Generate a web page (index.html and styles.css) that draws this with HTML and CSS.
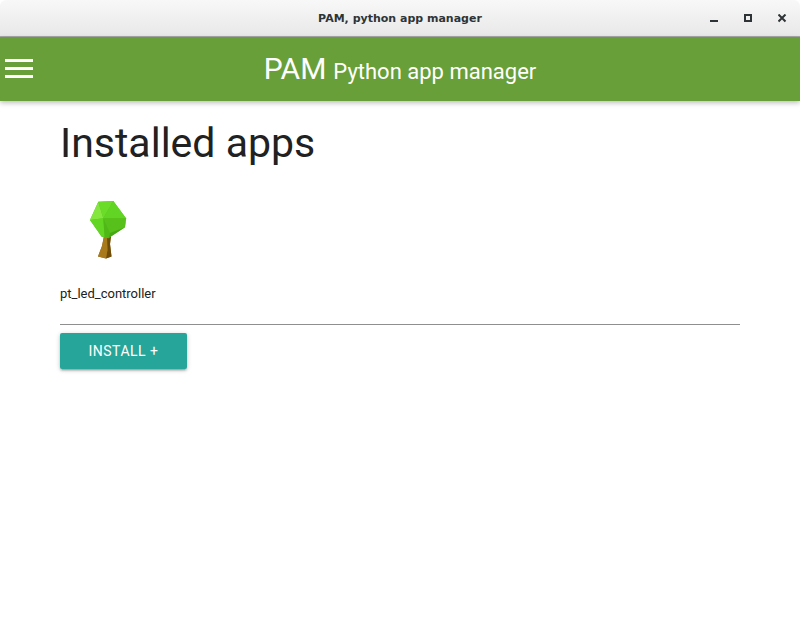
FILE: index.html
```html
<!DOCTYPE html>
<html lang="en">
<head>
<meta charset="utf-8">
<title>PAM, python app manager</title>
<link rel="stylesheet" href="styles.css">
</head>
<body>
<div class="window">
  <header class="titlebar">
    <div class="titlebar-title">PAM, python app manager</div>
    <div class="window-controls">
      <svg class="wc" width="10" height="10" viewBox="0 0 10 10"><rect x="0" y="6" width="8" height="2" fill="#2e3436"/></svg>
      <svg class="wc" width="10" height="10" viewBox="0 0 10 10"><rect x="1" y="1" width="6" height="6" fill="none" stroke="#2e3436" stroke-width="2"/></svg>
      <svg class="wc" width="10" height="10" viewBox="0 0 10 10"><path d="M0.5 0.5 L7.5 7.5 M7.5 0.5 L0.5 7.5" stroke="#2e3436" stroke-width="2" fill="none"/></svg>
    </div>
  </header>
  <nav class="appbar">
    <button class="menu" aria-label="Menu"><span></span><span></span><span></span></button>
    <div class="appbar-title"><span class="big">PAM</span> <span class="small">Python app manager</span></div>
  </nav>
  <main class="content">
    <h1 class="heading">Installed apps</h1>
    <div class="app">
      <svg class="app-icon" width="48" height="64" viewBox="0 0 48 64">
        <path d="M20 38 L27 38 L26 46 L27.5 58.5 L22 60.5 L14 58.5 L18 48 Z" fill="#8f6410"/>
        <path d="M23 40 L27 38 L26 46 L27.5 58.5 L22 60.5 L23.5 52 Z" fill="#6f4c08"/>
        <path d="M14 58.5 L18 48 L20 38 L23 40 L23.5 52 L22 60.5 Z" fill="#a87a1c"/>
        <path d="M14.3 3.7 L29.3 3 L42 20.3 L41 29.3 L24.3 40.3 L17.7 38.7 L6 22 Z" fill="#58c41c"/>
        <path d="M14.3 3.7 L6 22 L19.3 20.3 Z" fill="#86e640"/>
        <path d="M14.3 3.7 L29.3 3 L19.3 20.3 Z" fill="#6cdc2a"/>
        <path d="M29.3 3 L42 20.3 L19.3 20.3 Z" fill="#62d424"/>
        <path d="M6 22 L19.3 20.3 L21 38.7 L17.7 38.7 Z" fill="#62d622"/>
        <path d="M19.3 20.3 L42 20.3 L41 29.3 L26 35 Z" fill="#58c01a"/>
        <path d="M19.3 20.3 L26 35 L24.3 40.3 L20.5 39.5 Z" fill="#50b816"/>
        <path d="M26 35 L41 29.3 L24.3 40.3 Z" fill="#46a814"/>
      </svg>
      <div class="app-name">pt_led_controller</div>
    </div>
    <hr class="divider">
    <button class="install">INSTALL +</button>
  </main>
</div>
</body>
</html>
```
FILE: styles.css
```css
* { box-sizing: border-box; }
html, body { margin: 0; padding: 0; height: 100%; background: #fff; }
.window {
  width: 800px;
  height: 637px;
  display: flex;
  flex-direction: column;
  font-family: Roboto, sans-serif;
  color: #212121;
  background: #fff;
  overflow: hidden;
}
.titlebar {
  height: 37px;
  flex: none;
  display: flex;
  align-items: center;
  justify-content: center;
  position: relative;
  background: linear-gradient(#f8f8f8, #e8e8e8);
  border-bottom: 1px solid #a8a8a8;
  border-radius: 6px 6px 0 0;
}
.titlebar-title {
  font-family: "DejaVu Sans", sans-serif;
  font-weight: 700;
  font-size: 11px;
  color: #2e3436;
}
.window-controls {
  position: absolute;
  right: 12px;
  top: 14px;
  display: flex;
  gap: 24px;
}
.wc { display: block; }
.appbar {
  height: 64px;
  flex: none;
  background: #689f38;
  color: #fff;
  display: flex;
  align-items: center;
  justify-content: center;
  position: relative;
  padding-bottom: 2px;
  box-shadow: 0 2px 5px rgba(0,0,0,.26);
}
.menu {
  position: absolute;
  left: 5px;
  top: 22px;
  width: 28px;
  height: 19px;
  padding: 0;
  border: 0;
  background: none;
  display: flex;
  flex-direction: column;
  justify-content: space-between;
}
.menu span { display: block; height: 3px; background: #fff; }
.appbar-title { white-space: nowrap; font-weight: 400; }
.big { font-size: 30px; font-weight: 400; margin-right: 3px; }
.small { font-size: 22px; font-weight: 400; }
.content { padding: 0 60px; flex: 1; }
.heading {
  margin: 16px 0 0;
  font-size: 41px;
  line-height: 52px;
  font-weight: 400;
}
.app { margin-top: 29px; height: 126px; }
.app-icon { display: block; margin-left: 24px; }
.app-name { margin-top: 23px; font-size: 13px; line-height: 18px; }
.divider { margin: 0; border: 0; height: 1px; background: #8f8f8f; }
.install {
  display: block;
  margin-top: 8px;
  width: 127px;
  height: 36px;
  background: #26a69a;
  color: #fff;
  border: 0;
  border-radius: 2px;
  font-family: Roboto, sans-serif;
  font-size: 14px;
  font-weight: 400;
  letter-spacing: .5px;
  box-shadow: 0 2px 2px rgba(0,0,0,.14), 0 3px 1px -2px rgba(0,0,0,.12), 0 1px 5px rgba(0,0,0,.2);
}
```
